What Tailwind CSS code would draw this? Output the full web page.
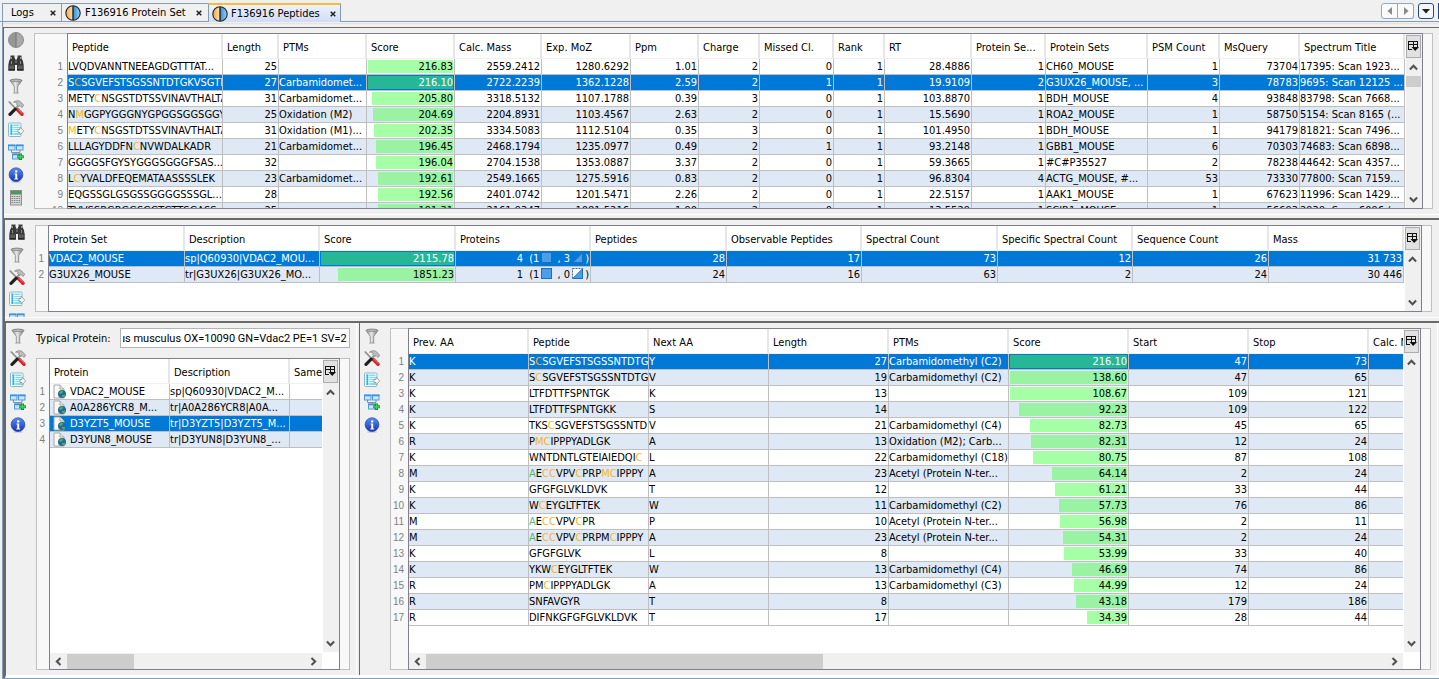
<!DOCTYPE html>
<html lang="en">

<head>
    <meta charset="UTF-8">
    <meta name="viewport" content="width=device-width, initial-scale=1.0">
    <title>F136916 Peptides</title>
    <script src="https://cdn.jsdelivr.net/npm/@tailwindcss/browser@4"></script>
</head>

<body class="bg-[#f0f0f0] text-black text-[11px] leading-[15px] font-['DejaVu_Sans_Condensed','Noto_Sans',sans-serif]">

    <!-- icon sprite -->
    <svg class="absolute size-0">
        <defs>
            <linearGradient id="gMetal" x1="0" x2="1">
                <stop offset="0" stop-color="#8a8a8a" />
                <stop offset=".45" stop-color="#e8e8e8" />
                <stop offset="1" stop-color="#6f6f6f" />
            </linearGradient>
            <linearGradient id="gInfo" x1="0" x2="0" y1="0" y2="1">
                <stop offset="0" stop-color="#5d8cf0" />
                <stop offset="1" stop-color="#1233b4" />
            </linearGradient>
            <linearGradient id="gOrange" x1="0" x2="1">
                <stop offset="0" stop-color="#f9a63a" />
                <stop offset="1" stop-color="#fde0b4" />
            </linearGradient>
            <linearGradient id="gBlue" x1="0" x2="1">
                <stop offset="0" stop-color="#2f8fdc" />
                <stop offset="1" stop-color="#9fd0f5" />
            </linearGradient>
        </defs>
        <symbol id="i-disc" viewBox="0 0 16 16">
            <circle cx="8" cy="8" r="7.5" fill="#a8a8a8" stroke="#8c8c8c" />
            <path d="M8 .5a7.5 7.5 0 0 0 0 15z" fill="#969696" />
            <path d="M8 .5v15" stroke="#757575" />
        </symbol>
        <symbol id="i-tab" viewBox="0 0 16 16">
            <path d="M8 .8a7.2 7.2 0 0 0 0 14.4z" fill="url(#gOrange)" />
            <path d="M8 .8a7.2 7.2 0 0 1 0 14.4z" fill="url(#gBlue)" />
            <circle cx="8" cy="8" r="7.2" fill="none" stroke="#222" stroke-width="1.1" />
            <path d="M8 1v14" stroke="#222" stroke-width="1.4" />
        </symbol>
        <symbol id="i-find" viewBox="0 0 16 16">
            <path d="M2.500.500h4V3h.5v1.500h2V3h.5V.500h4V3.500l1.300 2L15.700 10v5.500H9V10H7v5.500H.3V10l.9-4.500 1.300-2z" fill="#3a3a3a" />
            <path d="M1.500 10.500h4.500v3.500H1.500zM10 10.500h4.500v3.500H10z" fill="#5c5c5c" />
            <path d="M3.500 2v2M12.500 2v2M3.500 6v3M12.500 6v3M8 5.500v2.500" stroke="#8f8f8f" />
            <path d="M.5 15h6.300M9.200 15h6.300" stroke="#111" />
        </symbol>
        <symbol id="i-filter" viewBox="0 0 16 16">
            <path d="M2 2.500C2 .8 14 .8 14 2.500L9.700 8.500v6.500H6.300V8.500z" fill="url(#gMetal)" stroke="#7c7c7c" stroke-width=".7" />
            <ellipse cx="8" cy="2.400" rx="5.600" ry="1.200" fill="#b9b9b9" stroke="#777" stroke-width=".6" />
            <path d="M5 15.500h6" stroke="#c8c8c8" />
        </symbol>
        <symbol id="i-tools" viewBox="0 0 16 16">
            <path d="M.8 1.500l7.200 7.500" stroke="#8e8e8e" stroke-width="1.800" />
            <path d="M8.800 9l5.200 5.200" stroke="#d92525" stroke-width="3.400" stroke-linecap="round" />
            <path d="M9.500 8.700l4.700 4.700" stroke="#f58080" stroke-width=".8" />
            <path d="M11.500 4.500L7 9" stroke="#9c9c9c" stroke-width="2.200" />
            <path d="M7.200 9.200l-5.200 5.200" stroke="#202020" stroke-width="3.200" stroke-linecap="round" />
            <path d="M5.500 2.200C8 .2 11 .3 12.500 1.800l3.200 3.400-1.700 2.300-1.900-1.900-1.600.7-1.900-2 .6-1.200C8.200 2.300 7 2.200 5.500 2.200z" fill="#bdbdbd" stroke="#7d7d7d" stroke-width=".7" />
        </symbol>
        <symbol id="i-export" viewBox="0 0 16 16">
            <rect x=".5" y="1" width="12.500" height="13.500" rx="1" fill="#fff" stroke="#8fb6c2" />
            <rect x="2" y="2.500" width="9.500" height="10.500" fill="#7fdcf7" />
            <path d="M2 4.500h9.500M2 6.500h9.500M2 8.500h9.500M2 10.500h9.500M4.800 2.500V13" stroke="#fff" stroke-width=".8" />
            <path d="M3.400 2.500V13" stroke="#2fb5e2" stroke-width="1.600" />
            <path d="M10 7.500h2V5l3.700 4L12 13v-2.500h-2z" fill="#fafafa" stroke="#87948c" stroke-width=".8" />
        </symbol>
        <symbol id="i-net" viewBox="0 0 16 16">
            <path d="M3.500 5.500v3h8.500v-3M8 8.500v2.500" fill="none" stroke="#8d8d8d" />
            <rect x=".5" y="1" width="6.500" height="5" fill="#c9e6fb" stroke="#4a9be0" />
            <rect x="8.500" y="1" width="6.500" height="5" fill="#c9e6fb" stroke="#4a9be0" />
            <rect x="4.500" y="10" width="6.500" height="5" fill="#c9e6fb" stroke="#4a9be0" />
            <path d="M0 1.500h7.500M8 1.500h7.500M4 10.500h7.500" stroke="#3d90dc" stroke-width="1.600" />
            <path d="M12.500 9.500v6.500M9.300 12.700h6.500" stroke="#138a1c" stroke-width="3" />
            <path d="M12.500 10.200v5M10 12.700h5" stroke="#3fd84a" stroke-width="1.400" />
        </symbol>
        <symbol id="i-info" viewBox="0 0 16 16">
            <ellipse cx="8" cy="15" rx="5" ry=".9" fill="#cfcfcf" />
            <circle cx="8" cy="7.700" r="6.900" fill="url(#gInfo)" stroke="#2444b0" stroke-width=".7" />
            <circle cx="8.200" cy="4.400" r="1.200" fill="#fff" />
            <path d="M6.500 6.500h2.700v5h1v1H6.300v-1h1v-4h-.8z" fill="#fff" />
        </symbol>
        <symbol id="i-calc" viewBox="0 0 16 16">
            <rect x="2.500" y=".5" width="11" height="14.500" fill="#d6d6d6" stroke="#8f8f8f" />
            <rect x="3" y="1" width="10" height="3.500" fill="#4f9465" />
            <path d="M3.500 6.500h9M3.500 8.500h9M3.500 10.500h9M3.500 12.500h9" stroke="#7d7d7d" stroke-dasharray="1.400 1" />
        </symbol>
        <symbol id="i-page" viewBox="0 0 14 15">
            <path d="M1 1h6l4 4v9H1z" fill="#fbfbfb" stroke="#a5a5a5" />
            <path d="M7 1v4h4" fill="#e8e8e8" stroke="#a5a5a5" />
            <circle cx="9" cy="10" r="4" fill="#23679c" />
            <path d="M6 8.500c1-1.500 3-2 4-1.500l-.5 2-2 1zM8.500 11.500l3-1 .8 1.500-1.800 1.800z" fill="#4fae5c" />
        </symbol>
        <symbol id="i-cols" viewBox="0 0 11 11">
            <path d="M0 .5h10M0 3.500h10M.5 0v9M5.500 0v6M9.500 0v6M0 8.500h4" stroke="#111" fill="none" />
            <path d="M3.500 6h7.500L7.200 10z" fill="#111" />
        </symbol>
        <symbol id="i-up" viewBox="0 0 8 8"><path d="M.8 5.800L4 2.500l3.200 3.300" fill="none" stroke="#505050" stroke-width="1.800" /></symbol>
        <symbol id="i-down" viewBox="0 0 8 8"><path d="M.8 2.200L4 5.500l3.200-3.300" fill="none" stroke="#505050" stroke-width="1.800" /></symbol>
        <symbol id="i-left" viewBox="0 0 8 8"><path d="M5.800.8L2.500 4l3.300 3.200" fill="none" stroke="#505050" stroke-width="1.800" /></symbol>
        <symbol id="i-right" viewBox="0 0 8 8"><path d="M2.200.8L5.500 4 2.200 7.200" fill="none" stroke="#505050" stroke-width="1.800" /></symbol>
        <symbol id="i-close" viewBox="0 0 6 6"><path d="M.7.7l4.600 4.600M5.300.7L.7 5.300" stroke="#222" stroke-width="1.500" /></symbol>
    </svg>

    <div class="flex h-screen flex-col overflow-hidden">

        <!-- tabs -->
        <header class="flex h-[22px] shrink-0 border-b border-[#7f9db9] pl-[2px]">
            <nav class="-mb-px flex items-stretch pt-[3px]">
                <div class="flex w-[60px] items-center justify-between border-x border-y border-[#7f9db9] pr-[5px] pl-2">
                    <button>Logs</button>
                    <button aria-label="Close Logs"><svg class="size-[6px]"><use href="#i-close" /></svg></button>
                </div>
                <div class="flex w-[146px] items-center border-y border-[#7f9db9] pr-[6px] pl-[3px]">
                    <svg class="mr-1 size-4"><use href="#i-tab" /></svg>
                    <button class="whitespace-nowrap">F136916 Protein Set</button>
                    <button class="ml-auto" aria-label="Close Protein Set"><svg class="size-[6px]"><use href="#i-close" /></svg></button>
                </div>
                <div class="flex w-[133px] items-center border-x border-t-2 border-x-[#7f9db9] border-t-[#fdb933] bg-gradient-to-b from-[#eef3fd] to-[#cfdcf5] pr-[4px] pl-[3px]">
                    <svg class="mr-[3px] size-4"><use href="#i-tab" /></svg>
                    <button class="whitespace-nowrap">F136916 Peptides</button>
                    <button class="ml-auto" aria-label="Close Peptides"><svg class="size-[6px]"><use href="#i-close" /></svg></button>
                </div>
            </nav>
            <div class="ml-auto flex pt-[3px]">
                <button class="flex h-4 w-[17px] items-center justify-center rounded-l-[3px] border border-[#8ba9c5] bg-[#fafafa]" aria-label="Previous tab">
                    <svg class="size-2" viewBox="0 0 8 8"><path d="M6 0v8L1.500 4z" fill="#8a8a8a" /></svg>
                </button>
                <button class="flex h-4 w-4 items-center justify-center rounded-r-[3px] border border-l-0 border-[#8ba9c5] bg-[#fafafa]" aria-label="Next tab">
                    <svg class="size-2" viewBox="0 0 8 8"><path d="M2 0v8l4.500-4z" fill="#8a8a8a" /></svg>
                </button>
                <button class="ml-1 flex h-4 w-4 items-center justify-center rounded-[3px] border border-[#27487a] bg-[#f4f7fb]" aria-label="Tab list">
                    <svg class="size-2" viewBox="0 0 8 8"><path d="M0 2h8L4 6.500z" fill="#222" /></svg>
                </button>
                <div class="ml-1 h-4 w-px bg-[#27487a]"></div>
            </div>
        </header>

        <main class="ml-[2px] flex min-h-0 flex-1 flex-col border-b border-l border-[#7f9db9]">
            <div class="mt-px mb-[3px] h-px shrink-0 bg-[#e4e4d8]"></div>
            <div class="flex min-h-0 flex-1 flex-col border-t border-l border-[#696969]">

                <!-- peptides -->
                <section class="flex h-[186px] shrink-0 pr-[6px]">
                    <div class="flex w-[30px] shrink-0 flex-col pt-px pl-1" data-toolbar="disc find filter tools export net info calc"></div>
                    <div class="my-[5px] flex min-w-0 flex-1" id="peptides"></div>
                </section>

                <div class="flex min-h-0 flex-1 flex-col border-t border-white">
                    <div class="mt-[3px] flex min-h-0 flex-1 flex-col border-t-2 border-l border-[#696969]">

                        <!-- protein sets -->
                        <section class="flex h-[97px] shrink-0 pr-[7px]">
                            <div class="flex w-[30px] shrink-0 flex-col overflow-hidden pl-1" data-toolbar="find filter tools export net"></div>
                            <div class="my-[5px] flex min-w-0 flex-1" id="proteinSets"></div>
                        </section>

                        <div class="flex min-h-0 flex-1 flex-col border-t border-white">
                            <div class="mt-[3px] flex min-h-0 flex-1 border-t-2 border-b-[3px] border-l border-t-[#696969] border-b-white border-l-[#696969]">

                                <!-- proteins -->
                                <section class="flex w-[351px] shrink-0 border-r border-white pr-[6px]">
                                    <div class="flex w-[30px] shrink-0 flex-col pt-[2px] pl-1" data-toolbar="filter tools export net info"></div>
                                    <div class="my-[5px] flex min-w-0 flex-1 flex-col">
                                        <div class="mb-[10px] flex items-center">
                                            <label for="typical" class="w-[84px] shrink-0 whitespace-nowrap">Typical Protein:</label>
                                            <input id="typical" value="us musculus OX=10090 GN=Vdac2 PE=1 SV=2"
                                                class="h-5 min-w-0 flex-1 border border-[#b4b4b4] bg-white px-[2px] text-right font-['Roboto',sans-serif]">
                                        </div>
                                        <div class="flex min-h-0 flex-1" id="proteins"></div>
                                    </div>
                                </section>

                                <!-- peptides of the protein -->
                                <section class="ml-[2px] flex min-w-0 flex-1 border-l border-[#696969] pr-[6px]">
                                    <div class="flex w-[30px] shrink-0 flex-col pt-[2px] pl-1" data-toolbar="filter tools export net info"></div>
                                    <div class="my-[5px] flex min-w-0 flex-1" id="proteinPeptides"></div>
                                </section>
                                <div class="w-[2px] border-l border-white"></div>
                            </div>
                        </div>
                    </div>
                </div>
            </div>
        </main>
    </div>

    <script>
        const labels = {
            disc: 'Display', find: 'Search', filter: 'Filter', tools: 'Settings',
            export: 'Export', net: 'Add view', info: 'Info', calc: 'Calculator'
        };

        document.querySelectorAll('[data-toolbar]').forEach(function (bar) {
            bar.innerHTML = bar.dataset.toolbar.split(' ').map(function (name) {
                const size = name === 'find' || name === 'info' ? 'h-6' : 'h-[22px]';
                return `<button class="flex w-4 shrink-0 items-center ${size}" aria-label="${labels[name]}">
                    <svg class="size-4"><use href="#i-${name}" /></svg></button>`;
            }).join('');
        });

        // [X] is a modified residue, {X} an N-term modification
        function peptide(text) {
            return text
                .replace(/\{(\w+)\}/g, '<span class="text-green-600/70">$1</span>')
                .replace(/\[([A-Z]+)\]/g, '<span class="text-[#f8b41c]">$1</span>');
        }

        function cell(value, col, selected, odd) {
            if (col.type === 'score') {
                const width = Math.min(100, value / col.max * 100);
                const color = selected ? 'bg-[#26b896]' : odd ? 'bg-[#99f3a3]' : 'bg-[#a6ffa6]';
                return `<div class="flex justify-end p-px"><div class="h-[13px] text-right leading-[13px] ${color}" style="width:${width}%">${value}</div></div>`;
            }
            if (col.type === 'page') {
                return `<div class="flex items-center pl-[3px]"><svg class="mr-[3px] h-[15px] w-[14px] shrink-0"><use href="#i-page" /></svg>${value}</div>`;
            }
            return col.name === 'Peptide' ? peptide(value) : value;
        }

        function buildTable(id, opt) {
            const rows = opt.rows.map(function (row, i) {
                const selected = i === opt.selected;
                const odd = i % 2 === 1;
                const color = selected ? 'bg-[#0078d7] text-white' : odd ? 'bg-[#dfe9f5]' : 'bg-white';
                return `<tr class="${color}">` + row.map(function (value, c) {
                    const col = opt.cols[c];
                    const align = col.right ? 'text-right pr-px' : 'px-0';
                    return `<td class="h-4 overflow-hidden border-r border-b border-[#bfbfbf] py-0 whitespace-nowrap ${align}">${cell(value, col, selected, odd)}</td>`;
                }).join('') + '</tr>';
            }).join('');

            document.getElementById(id).innerHTML = `
            <div class="flex min-w-0 flex-1 border border-[#c0c0c0] bg-[#f8f8f8]">
                <div class="shrink-0 overflow-hidden pt-[25px] text-right font-['Liberation_Sans',sans-serif] text-[10px] text-[#808080] ${opt.gutter}">
                    ${opt.rows.map((r, i) => `<div class="h-4 leading-4">${i + 1}</div>`).join('')}
                </div>
                <div class="-my-px flex min-w-0 flex-1 border border-[#80808c] bg-white">
                    <div class="flex min-w-0 flex-1 flex-col">
                        <div class="min-h-0 flex-1 overflow-hidden">
                            <table class="table-fixed border-separate border-spacing-0 ${opt.width}">
                                <colgroup>${opt.cols.map(c => `<col style="width:${c.w}px">`).join('')}</colgroup>
                                <thead><tr>${opt.cols.map(c => `<th class="h-[25px] overflow-hidden border-r-2 border-b border-r-[#e6e6e6] border-b-[#f0f0f0] pt-[2px] pr-0 pb-0 pl-1 text-left font-normal whitespace-nowrap">${c.name}</th>`).join('')}</tr></thead>
                                <tbody>${rows}</tbody>
                            </table>
                        </div>
                        ${opt.hscroll ? `
                        <div class="mt-px flex h-4 shrink-0 items-center bg-[#f0f0f0]">
                            <button class="flex w-[17px] justify-center" aria-label="Scroll left"><svg class="size-[9px]"><use href="#i-left" /></svg></button>
                            <div class="h-[15px] flex-1"><div class="h-full bg-[#cdcdcd] ${opt.hscroll}"></div></div>
                            <button class="flex w-[17px] justify-center" aria-label="Scroll right"><svg class="size-[9px]"><use href="#i-right" /></svg></button>
                        </div>` : ''}
                    </div>
                    <div class="ml-px flex w-4 shrink-0 flex-col bg-[#f0f0f0] pr-px ${opt.hscroll ? 'mb-[17px]' : ''}">
                        <button class="mt-px flex h-[23px] shrink-0 items-center justify-center border border-[#adadad] bg-[#e1e1e1]" aria-label="Column control">
                            <svg class="size-[11px]"><use href="#i-cols" /></svg>
                        </button>
                        <button class="flex h-[18px] shrink-0 items-center justify-center" aria-label="Scroll up"><svg class="size-[9px]"><use href="#i-up" /></svg></button>
                        ${opt.vscroll ? '<div class="h-[11px] bg-[#cdcdcd]"></div>' : ''}
                        <button class="mt-auto flex h-[17px] shrink-0 items-center justify-center" aria-label="Scroll down"><svg class="size-[9px]"><use href="#i-down" /></svg></button>
                    </div>
                </div>
                <div class="w-[9px] shrink-0"></div>
            </div>`;
        }

        buildTable('peptides', {
            gutter: 'w-8 pr-1',
            width: 'w-full',
            selected: 1,
            vscroll: true,
            cols: [
                { name: 'Peptide', w: 155 },
                { name: 'Length', w: 56, right: true },
                { name: 'PTMs', w: 88 },
                { name: 'Score', w: 88, type: 'score', max: 216.83 },
                { name: 'Calc. Mass', w: 87, right: true },
                { name: 'Exp. MoZ', w: 89, right: true },
                { name: 'Ppm', w: 68, right: true },
                { name: 'Charge', w: 61, right: true },
                { name: 'Missed Cl.', w: 74, right: true },
                { name: 'Rank', w: 51, right: true },
                { name: 'RT', w: 87, right: true },
                { name: 'Protein Se...', w: 74, right: true },
                { name: 'Protein Sets', w: 102 },
                { name: 'PSM Count', w: 72, right: true },
                { name: 'MsQuery', w: 80, right: true },
                { name: 'Spectrum Title', w: 105 }
            ],
            rows: [
                ['LVQDVANNTNEEAGDGTTTAT...', '25', '', '216.83', '2559.2412', '1280.6292', '1.01', '2', '0', '1', '28.4886', '1', 'CH60_MOUSE', '1', '73704', '17395: Scan 1923...'],
                ['S[C]SGVEFSTSGSSNTDTGKVSGTLE', '27', 'Carbamidomet...', '216.10', '2722.2239', '1362.1228', '2.59', '2', '1', '1', '19.9109', '2', 'G3UX26_MOUSE, ...', '3', '78783', '9695: Scan 12125 ...'],
                ['METY[C]NSGSTDTSSVINAVTHALTA', '31', 'Carbamidomet...', '205.80', '3318.5132', '1107.1788', '0.39', '3', '0', '1', '103.8870', '1', 'BDH_MOUSE', '4', '93848', '83798: Scan 7668...'],
                ['N[M]GGPYGGGNYGPGGSGGSGGYG', '25', 'Oxidation (M2)', '204.69', '2204.8931', '1103.4567', '2.63', '2', '0', '1', '15.5690', '1', 'ROA2_MOUSE', '1', '58750', '5154: Scan 8165 (...'],
                ['[M]ETY[C]NSGSTDTSSVINAVTHALTA', '31', 'Oxidation (M1)...', '202.35', '3334.5083', '1112.5104', '0.35', '3', '0', '1', '101.4950', '1', 'BDH_MOUSE', '1', '94179', '81821: Scan 7496...'],
                ['LLLAGYDDFN[C]NVWDALKADR', '21', 'Carbamidomet...', '196.45', '2468.1794', '1235.0977', '0.49', '2', '1', '1', '93.2148', '1', 'GBB1_MOUSE', '6', '70303', '74683: Scan 6898...'],
                ['GGGGSFGYSYGGGSGGGFSAS...', '32', '', '196.04', '2704.1538', '1353.0887', '3.37', '2', '0', '1', '59.3665', '1', '#C#P35527', '2', '78238', '44642: Scan 4357...'],
                ['L[C]YVALDFEQEMATAASSSSLEK', '23', 'Carbamidomet...', '192.61', '2549.1665', '1275.5916', '0.83', '2', '0', '1', '96.8304', '4', 'ACTG_MOUSE, #...', '53', '73330', '77800: Scan 7159...'],
                ['EQGSSGLGSGSSGGGGSSSGL...', '28', '', '192.56', '2401.0742', '1201.5471', '2.26', '2', '0', '1', '22.5157', '1', 'AAK1_MOUSE', '1', '67623', '11996: Scan 1429...'],
                ['TVVSSRGRGGSGGTGTTSGASS...', '25', '', '191.31', '2161.9347', '1081.5216', '1.90', '2', '0', '1', '13.5529', '1', 'SCIR1_MOUSE', '1', '56693', '2939: Scan 6096 (...']
            ]
        });

        const square = '<svg class="mx-[2px] inline size-[11px] align-[-1px]" viewBox="0 0 11 11"><rect x=".5" y=".5" width="10" height="10" fill="#4a9fe8" stroke="#1c6fbd" /></svg>';
        const triangle = '<svg class="mx-[2px] inline size-[11px] align-[-1px]" viewBox="0 0 11 11"><path d="M10.500.8v9.700H.8z" fill="#4a9fe8" stroke="#1c6fbd" /></svg>';
        const dashed = '<svg class="mx-[2px] inline size-[11px] align-[-1px]" viewBox="0 0 11 11"><rect x=".5" y=".5" width="10" height="10" fill="#fff" stroke="#3f6a9a" stroke-dasharray="2 1" /><path d="M10.500.8v9.700H.8z" fill="#4a9fe8" stroke="#1c6fbd" /></svg>';

        buildTable('proteinSets', {
            gutter: 'w-3 pr-1',
            width: 'w-full',
            selected: 0,
            cols: [
                { name: 'Protein Set', w: 136 },
                { name: 'Description', w: 135 },
                { name: 'Score', w: 136, type: 'score', max: 2115.78 },
                { name: 'Proteins', w: 135, right: true },
                { name: 'Peptides', w: 136, right: true },
                { name: 'Observable Peptides', w: 135, right: true },
                { name: 'Spectral Count', w: 136, right: true },
                { name: 'Specific Spectral Count', w: 135, right: true },
                { name: 'Sequence Count', w: 136, right: true },
                { name: 'Mass', w: 135, right: true }
            ],
            rows: [
                ['VDAC2_MOUSE', 'sp|Q60930|VDAC2_MOU...', '2115.78', `4 &nbsp;(1${square} , 3${triangle})`, '28', '17', '73', '12', '26', '31 733'],
                ['G3UX26_MOUSE', 'tr|G3UX26|G3UX26_MO...', '1851.23', `1 &nbsp;(1${square} , 0${dashed})`, '24', '16', '63', '2', '24', '30 446']
            ]
        });

        buildTable('proteins', {
            gutter: 'w-3 pr-1',
            width: 'w-[360px]',
            selected: 2,
            hscroll: 'w-[67px]',
            cols: [
                { name: 'Protein', w: 120, type: 'page' },
                { name: 'Description', w: 120 },
                { name: 'Sameset', w: 120 }
            ],
            rows: [
                ['VDAC2_MOUSE', 'sp|Q60930|VDAC2_M...', ''],
                ['A0A286YCR8_M...', 'tr|A0A286YCR8|A0A...', ''],
                ['D3YZT5_MOUSE', 'tr|D3YZT5|D3YZT5_M...', ''],
                ['D3YUN8_MOUSE', 'tr|D3YUN8|D3YUN8_...', '']
            ]
        });

        buildTable('proteinPeptides', {
            gutter: 'w-[17px] pr-1',
            width: 'w-[1080px]',
            selected: 0,
            hscroll: 'w-[397px]',
            cols: [
                { name: 'Prev. AA', w: 120 },
                { name: 'Peptide', w: 120 },
                { name: 'Next AA', w: 120 },
                { name: 'Length', w: 120, right: true },
                { name: 'PTMs', w: 120 },
                { name: 'Score', w: 120, type: 'score', max: 100 },
                { name: 'Start', w: 120, right: true },
                { name: 'Stop', w: 120, right: true },
                { name: 'Calc. Mass', w: 120, right: true }
            ],
            rows: [
                ['K', 'S[C]SGVEFSTSGSSNTDTGK', 'Y', '27', 'Carbamidomethyl (C2)', '216.10', '47', '73', ''],
                ['K', 'S[C]SGVEFSTSGSSNTDTG', 'V', '19', 'Carbamidomethyl (C2)', '138.60', '47', '65', ''],
                ['K', 'LTFDTTFSPNTGK', 'K', '13', '', '108.67', '109', '121', ''],
                ['K', 'LTFDTTFSPNTGKK', 'S', '14', '', '92.23', '109', '122', ''],
                ['K', 'TKS[C]SGVEFSTSGSSNTD', 'V', '21', 'Carbamidomethyl (C4)', '82.73', '45', '65', ''],
                ['R', 'P[MC]IPPPYADLGK', 'A', '13', 'Oxidation (M2); Carb...', '82.31', '12', '24', ''],
                ['K', 'WNTDNTLGTEIAIEDQI[C]', 'L', '22', 'Carbamidomethyl (C18)', '80.75', '87', '108', ''],
                ['M', '{A}E[CC]VPV[C]PRP[MC]IPPPY', 'A', '23', 'Acetyl (Protein N-ter...', '64.14', '2', '24', ''],
                ['K', 'GFGFGLVKLDVK', 'T', '12', '', '61.21', '33', '44', ''],
                ['K', 'W[C]EYGLTFTEK', 'W', '11', 'Carbamidomethyl (C2)', '57.73', '76', '86', ''],
                ['M', '{A}E[CC]VPV[C]PR', 'P', '10', 'Acetyl (Protein N-ter...', '56.98', '2', '11', ''],
                ['M', '{A}E[CC]VPV[C]PRPM[C]IPPPY', 'A', '23', 'Acetyl (Protein N-ter...', '54.31', '2', '24', ''],
                ['K', 'GFGFGLVK', 'L', '8', '', '53.99', '33', '40', ''],
                ['K', 'YKW[C]EYGLTFTEK', 'W', '13', 'Carbamidomethyl (C4)', '46.69', '74', '86', ''],
                ['R', 'PM[C]IPPPYADLGK', 'A', '13', 'Carbamidomethyl (C3)', '44.99', '12', '24', ''],
                ['R', 'SNFAVGYR', 'T', '8', '', '43.18', '179', '186', ''],
                ['R', 'DIFNKGFGFGLVKLDVK', 'T', '17', '', '34.39', '28', '44', '']
            ]
        });

        // keep the end of the description in view
        const typical = document.getElementById('typical');
        typical.scrollLeft = typical.scrollWidth;
    </script>
</body>

</html>
